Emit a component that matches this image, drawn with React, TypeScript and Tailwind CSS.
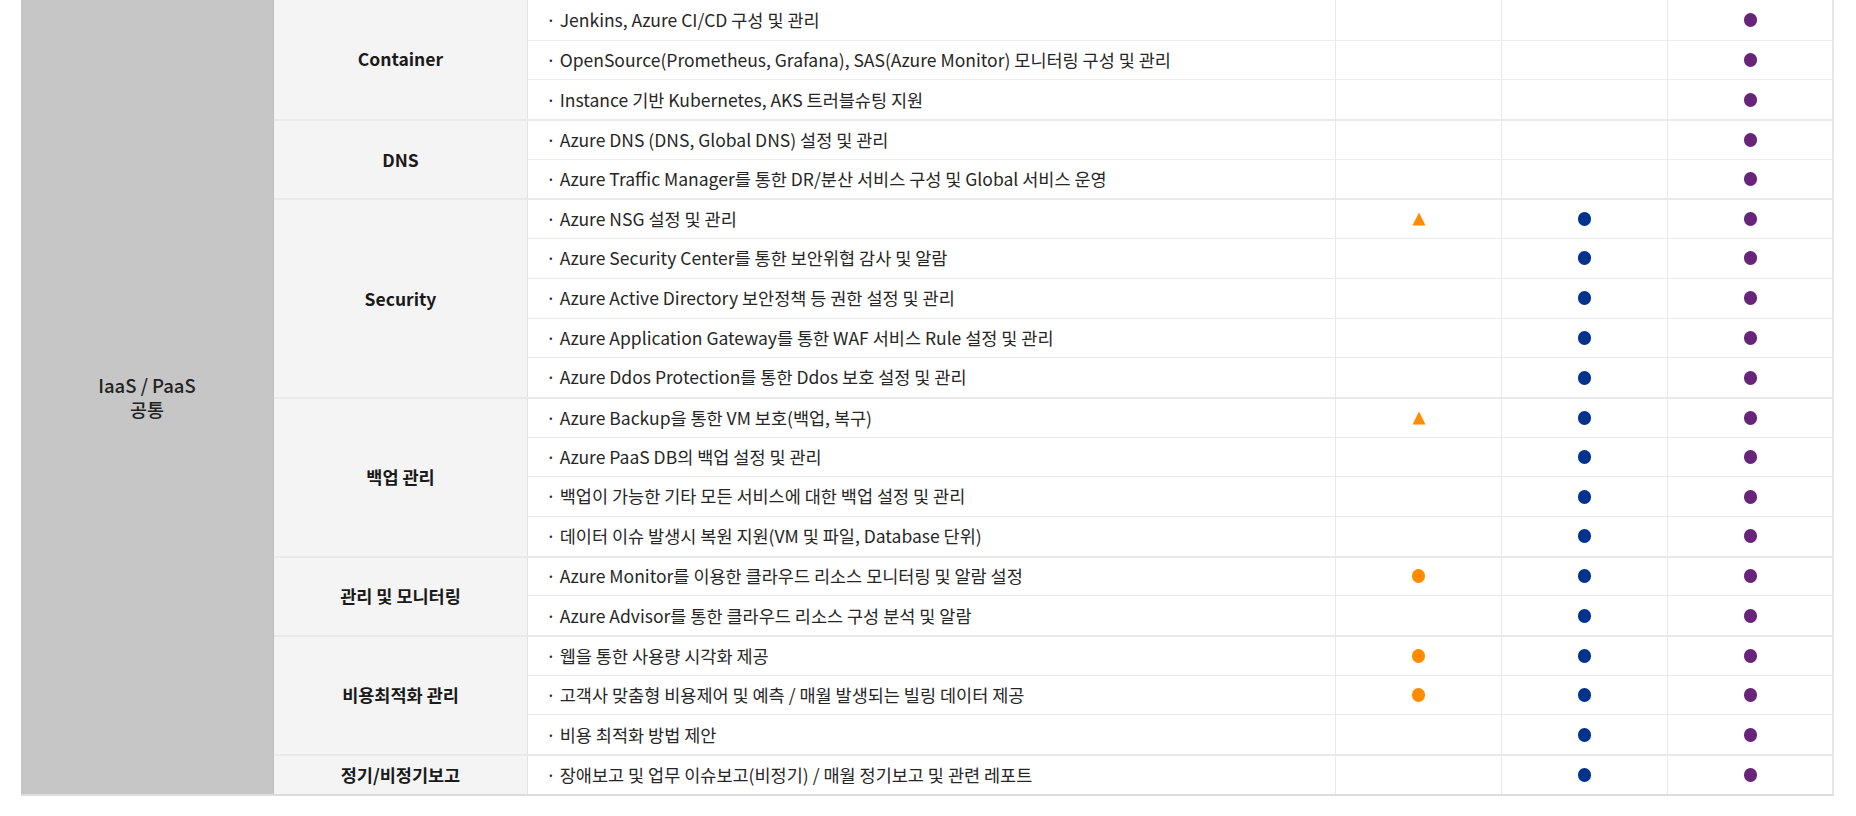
import React from 'react'

type Mark = 'tri' | 'dot' | null

type Row = {
  text: string
  a: Mark
  b: boolean
  c: boolean
}

type Group = {
  label: string
  rows: Row[]
}

const groups: Group[] = [
  {
    label: 'Container',
    rows: [
      { text: '· Jenkins, Azure CI/CD 구성 및 관리', a: null, b: false, c: true },
      { text: '· OpenSource(Prometheus, Grafana), SAS(Azure Monitor) 모니터링 구성 및 관리', a: null, b: false, c: true },
      { text: '· Instance 기반 Kubernetes, AKS 트러블슈팅 지원', a: null, b: false, c: true },
    ],
  },
  {
    label: 'DNS',
    rows: [
      { text: '· Azure DNS (DNS, Global DNS) 설정 및 관리', a: null, b: false, c: true },
      { text: '· Azure Traffic Manager를 통한 DR/분산 서비스 구성 및 Global 서비스 운영', a: null, b: false, c: true },
    ],
  },
  {
    label: 'Security',
    rows: [
      { text: '· Azure NSG 설정 및 관리', a: 'tri', b: true, c: true },
      { text: '· Azure Security Center를 통한 보안위협 감사 및 알람', a: null, b: true, c: true },
      { text: '· Azure Active Directory 보안정책 등 권한 설정 및 관리', a: null, b: true, c: true },
      { text: '· Azure Application Gateway를 통한 WAF 서비스 Rule 설정 및 관리', a: null, b: true, c: true },
      { text: '· Azure Ddos Protection를 통한 Ddos 보호 설정 및 관리', a: null, b: true, c: true },
    ],
  },
  {
    label: '백업 관리',
    rows: [
      { text: '· Azure Backup을 통한 VM 보호(백업, 복구)', a: 'tri', b: true, c: true },
      { text: '· Azure PaaS DB의 백업 설정 및 관리', a: null, b: true, c: true },
      { text: '· 백업이 가능한 기타 모든 서비스에 대한 백업 설정 및 관리', a: null, b: true, c: true },
      { text: '· 데이터 이슈 발생시 복원 지원(VM 및 파일, Database 단위)', a: null, b: true, c: true },
    ],
  },
  {
    label: '관리 및 모니터링',
    rows: [
      { text: '· Azure Monitor를 이용한 클라우드 리소스 모니터링 및 알람 설정', a: 'dot', b: true, c: true },
      { text: '· Azure Advisor를 통한 클라우드 리소스 구성 분석 및 알람', a: null, b: true, c: true },
    ],
  },
  {
    label: '비용최적화 관리',
    rows: [
      { text: '· 웹을 통한 사용량 시각화 제공', a: 'dot', b: true, c: true },
      { text: '· 고객사 맞춤형 비용제어 및 예측 / 매월 발생되는 빌링 데이터 제공', a: 'dot', b: true, c: true },
      { text: '· 비용 최적화 방법 제안', a: null, b: true, c: true },
    ],
  },
  {
    label: '정기/비정기보고',
    rows: [{ text: '· 장애보고 및 업무 이슈보고(비정기) / 매월 정기보고 및 관련 레포트', a: null, b: true, c: true }],
  },
]

const Triangle = () => (
  <svg width="14" height="14" viewBox="0 0 14 14">
    <polygon points="7,0.5 13.5,13.5 0.5,13.5" fill="#ff8c00" />
  </svg>
)

const Dot = ({ color }: { color: string }) => (
  <span className={`block w-[13px] h-[14px] rounded-full ${color}`} />
)

const Cell = ({ children }: { children?: React.ReactNode }) => (
  <div className="w-[166px] h-full flex items-center justify-center border-l border-[#e8e8e8]">
    {children}
  </div>
)

export default function App() {
  return (
    <div
      className="w-[1856px] h-[816px] bg-white px-[21px] overflow-hidden"
      style={{ fontFamily: '"Noto Sans CJK KR", "Noto Sans", sans-serif' }}
    >
      <div className="flex w-[1813px] border-b-2 border-[#dcdcdc] border-r-2 border-r-[#e6e6e6]">
        <div className="w-[253px] shrink-0 bg-[#c6c6c6] border-r border-[#bdbdbd] flex flex-col items-center justify-center text-[18.5px] leading-[24px] font-medium text-[#222]">
          <span>IaaS / PaaS</span>
          <span>공통</span>
        </div>
        <div className="flex-1 flex flex-col">
          {groups.map((g, gi) => (
            <div key={gi} className={`flex ${gi > 0 ? 'border-t-2 border-[#e9e9e9]' : ''}`}>
              <div className="w-[254px] shrink-0 bg-[#f4f4f4] border-r border-[#e3e3e3] flex items-center justify-center text-[17.5px] font-bold text-[#1a1a1a]">
                {g.label}
              </div>
              <div className="flex-1 flex flex-col">
                {g.rows.map((r, ri) => (
                  <div
                    key={ri}
                    className={`flex items-center ${ri > 0 ? 'border-t border-[#ececec]' : ''} ${
                      ri === 0 && gi > 0 ? 'h-[37.7px]' : 'h-[39.7px]'
                    }`}
                  >
                    <div className="w-[807px] h-full flex items-center pl-[18px] text-[17.5px] text-[#262626] whitespace-nowrap">
                      {r.text}
                    </div>
                    <Cell>
                      {r.a === 'tri' && <Triangle />}
                      {r.a === 'dot' && <Dot color="bg-[#ff8c00]" />}
                    </Cell>
                    <Cell>{r.b && <Dot color="bg-[#00338d]" />}</Cell>
                    <Cell>{r.c && <Dot color="bg-[#68237a]" />}</Cell>
                  </div>
                ))}
              </div>
            </div>
          ))}
        </div>
      </div>
    </div>
  )
}
